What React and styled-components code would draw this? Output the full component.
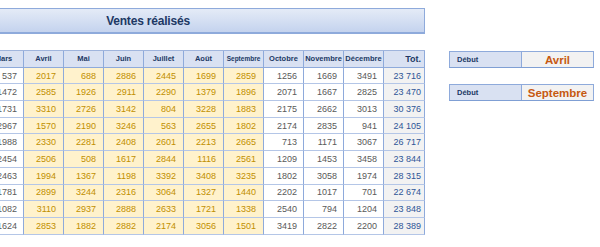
import React from "react";
import styled, { createGlobalStyle } from "styled-components";

const Global = createGlobalStyle`
  html, body { margin: 0; padding: 0; background: #ffffff; overflow: hidden; }
  body { font-family: "Liberation Sans", Arial, sans-serif; width: 600px; height: 247px; }
`;

const Page = styled.div`
  display: flex;
  align-items: flex-start;
  padding-top: 8px;
  width: 600px;
  height: 247px;
  box-sizing: border-box;
  overflow: hidden;
`;

const LeftCol = styled.div`
  display: flex;
  flex-direction: column;
  align-items: flex-end;
  flex: none;
  width: 554px;
  margin-left: -129px;
  gap: 16px;
`;

const TitleBar = styled.div`
  width: 554px;
  height: 26px;
  box-sizing: border-box;
  display: flex;
  align-items: center;
  justify-content: center;
  background: linear-gradient(180deg, #e4ebf7 0%, #d3def2 55%, #c4d3ee 100%);
  border: 1px solid #8eaadb;
  border-bottom: 2px solid #8eaadb;
  color: #203864;
  font-weight: bold;
  font-size: 12px;
  letter-spacing: -0.2px;
`;

const Sheet = styled.div`
  display: grid;
  grid-template-columns: repeat(10, 40px) 41px;
  grid-auto-rows: 16.7px;
  border-top: 1px solid #9fb4dc;
  width: 441px;
`;

const HeaderCell = styled.div`
  display: flex;
  align-items: center;
  justify-content: ${(p) => (p.$total ? "flex-end" : "center")};
  padding: 0 ${(p) => (p.$total ? "3px" : "0")};
  background: #d9e1f2;
  color: #203864;
  font-weight: bold;
  font-size: ${(p) => (p.$total ? "9px" : p.$small ? "6.5px" : "7.5px")};
  border-right: 1px solid #8eaadb;
  border-bottom: 1px solid #8eaadb;
  box-sizing: border-box;
  white-space: nowrap;
  overflow: hidden;
`;

const variants = {
  plain: { bg: "#ffffff", fg: "#595959", pad: "6px" },
  gold: { bg: "#fff2cc", fg: "#bf8f00", pad: "7px" },
  total: { bg: "#f2f2f2", fg: "#2f5597", pad: "3px" },
};

const DataCell = styled.div`
  display: flex;
  align-items: center;
  justify-content: flex-end;
  padding-right: ${(p) => variants[p.$variant].pad};
  background: ${(p) => variants[p.$variant].bg};
  color: ${(p) => variants[p.$variant].fg};
  font-size: 9px;
  border-right: 1px solid #8eaadb;
  border-bottom: 1px solid #b4c6e7;
  box-sizing: border-box;
  white-space: nowrap;
`;

const RightCol = styled.div`
  display: flex;
  flex-direction: column;
  gap: 16px;
  margin-left: 24px;
  padding-top: 43px;
`;

const InfoBox = styled.div`
  display: grid;
  grid-template-columns: 72px 71px;
  height: 17px;
  border: 1px solid #8eaadb;
  border-bottom: 1px solid #7f9fd4;
  box-sizing: border-box;
`;

const InfoLabel = styled.div`
  display: flex;
  align-items: center;
  padding-left: 7px;
  background: #d9e1f2;
  color: #203864;
  font-weight: bold;
  font-size: 7.5px;
  border-right: 1px solid #8eaadb;
`;

const InfoValue = styled.div`
  display: flex;
  align-items: center;
  justify-content: center;
  background: #f2f2f2;
  color: #c65911;
  font-weight: bold;
  font-size: 11.5px;
`;

const months = [
  "Mars", "Avril", "Mai", "Juin", "Juillet", "Août",
  "Septembre", "Octobre", "Novembre", "Décembre",
];

const rows = [
  [537, 2017, 688, 2886, 2445, 1699, 2859, 1256, 1669, 3491, "23 716"],
  [1472, 2585, 1926, 2911, 2290, 1379, 1896, 2071, 1667, 2825, "23 470"],
  [1731, 3310, 2726, 3142, 804, 3228, 1883, 2175, 2662, 3013, "30 376"],
  [2967, 1570, 2190, 3246, 563, 2655, 1802, 2174, 2835, 941, "24 105"],
  [1988, 2330, 2281, 2408, 2601, 2213, 2665, 713, 1171, 3067, "26 717"],
  [2454, 2506, 508, 1617, 2844, 1116, 2561, 1209, 1453, 3458, "23 844"],
  [2463, 1994, 1367, 1198, 3392, 3408, 3235, 1802, 3058, 1974, "28 315"],
  [1781, 2899, 3244, 2316, 3064, 1327, 1440, 2202, 1017, 701, "22 674"],
  [1082, 3110, 2937, 2888, 2633, 1721, 1338, 2540, 794, 1204, "23 848"],
  [1624, 2853, 1882, 2882, 2174, 3056, 1501, 3419, 2822, 2200, "28 389"],
];

const variantFor = (i) => (i === 10 ? "total" : i >= 1 && i <= 6 ? "gold" : "plain");

export default function App() {
  return (
    <>
      <Global />
      <Page>
        <LeftCol>
          <TitleBar>Ventes réalisés</TitleBar>
          <Sheet>
            {months.map((m) => (
              <HeaderCell key={m} $small={m.length > 8}>{m}</HeaderCell>
            ))}
            <HeaderCell $total>Tot.</HeaderCell>
            {rows.map((r, ri) =>
              r.map((v, ci) => (
                <DataCell key={`${ri}-${ci}`} $variant={variantFor(ci)}>
                  {v}
                </DataCell>
              ))
            )}
          </Sheet>
        </LeftCol>
        <RightCol>
          <InfoBox>
            <InfoLabel>Début</InfoLabel>
            <InfoValue>Avril</InfoValue>
          </InfoBox>
          <InfoBox>
            <InfoLabel>Début</InfoLabel>
            <InfoValue>Septembre</InfoValue>
          </InfoBox>
        </RightCol>
      </Page>
    </>
  );
}
